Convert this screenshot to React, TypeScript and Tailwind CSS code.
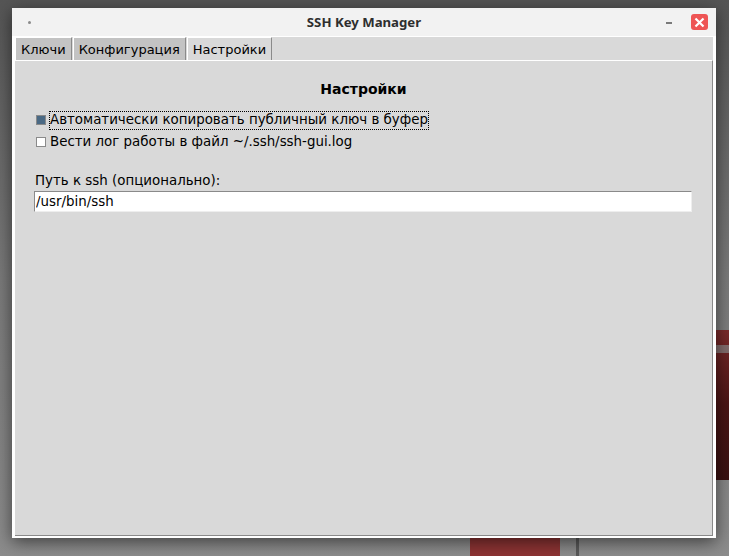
import { useState } from 'react';

const tabs = ['Ключи', 'Конфигурация', 'Настройки'];

function Checkbox({ checked }: { checked: boolean }) {
  return (
    <span
      className={`inline-block w-[10px] h-[10px] border border-[#8a8a8a] ${checked ? 'bg-[#4a6984]' : 'bg-white'}`}
    />
  );
}

export default function App() {
  const [active] = useState(2);

  return (
    <div className="relative w-[729px] h-[556px] overflow-hidden bg-gradient-to-b from-[#555555] via-[#7a7a7a] to-[#8c8c8c] font-['DejaVu_Sans',sans-serif]">
      {/* wallpaper bits */}
      <div className="absolute right-0 top-[330px] w-[40px] h-[150px] bg-gradient-to-b from-[#7a2a2a] via-[#4a1515] to-[#3a1212]" />
      <div className="absolute right-0 top-[345px] w-[40px] h-[8px] bg-[#8a8a8a]/70" />
      <div className="absolute left-[470px] top-[538px] w-[90px] h-[30px] rounded-bl-[10px] bg-[#8e3434]" />
      <div className="absolute left-[576px] top-[538px] w-[3px] h-[30px] bg-[#5a5a5a]" />

      {/* window */}
      <div className="absolute left-[12px] top-[8px] w-[704px] h-[530px] flex flex-col bg-white shadow-[0_4px_16px_rgba(0,0,0,0.55)]">
        {/* title bar */}
        <div className="relative h-[28px] flex items-center justify-center bg-[#f2f2f2]">
          <span className="absolute left-[16px] top-[13px] w-[3px] h-[3px] rounded-full bg-[#8a8a8a]" />
          <span className="font-['Noto_Sans',sans-serif] font-bold text-[13.2px] text-[#2e2e2e] leading-none pt-[1px]">
            SSH Key Manager
          </span>
          <span className="absolute left-[654px] top-[14px] w-[6px] h-[2px] bg-[#7a7a7a]" />
          <span className="absolute left-[679px] top-[6px] w-[17px] h-[16px] rounded-[3px] bg-[#ee5454] flex items-center justify-center">
            <svg width="11" height="11" viewBox="0 0 11 11">
              <path d="M1.5 1.5 L9.5 9.5 M9.5 1.5 L1.5 9.5" stroke="white" strokeWidth="2.2" />
            </svg>
          </span>
        </div>

        {/* body */}
        <div className="flex-1 flex flex-col mx-[3px] mb-[2px] border-t border-white bg-[#d9d9d9]">
          {/* tab bar */}
          <div className="flex items-end h-[23px] bg-[#d9d9d9]">
            {tabs.map((t, i) => (
              <div
                key={t}
                className={`px-[5px] text-[13px] leading-none text-black flex items-center border-t border-l border-white border-r border-r-[#8a8a8a] ${
                  i === active ? 'h-[24px] bg-[#d9d9d9] -mb-[1px]' : 'h-[23px] bg-[#c3c3c3]'
                } ${i > 0 ? 'ml-[1px]' : ''}`}
              >
                {t}
              </div>
            ))}
          </div>

          {/* content frame */}
          <div className="flex-1 flex flex-col border-t border-white border-r border-r-[#8a8a8a] border-b border-b-[#8a8a8a] px-[20px] text-[13.4px] text-black">
            <div className="mt-[21px] text-center font-bold text-[14px] leading-none">Настройки</div>

            <div className="mt-[14px] pl-[1px] flex items-center h-[20px]">
              <Checkbox checked />
              <span className="ml-[3px] px-[1px] h-[19px] flex items-center outline-1 outline-dotted outline-black -outline-offset-1">
                Автоматически копировать публичный ключ в буфер
              </span>
            </div>
            <div className="mt-[2px] pl-[1px] flex items-center h-[20px]">
              <Checkbox checked={false} />
              <span className="ml-[4px]">Вести лог работы в файл ~/.ssh/ssh-gui.log</span>
            </div>

            <div className="mt-[22px] leading-none">Путь к ssh (опционально):</div>
            <input
              readOnly
              value="/usr/bin/ssh"
              className="mt-[4px] ml-[-1px] w-[658px] h-[21px] px-[1px] bg-white text-[13.4px] text-black border border-t-[#8a8a8a] border-l-[#8a8a8a] border-r-[#eeeeee] border-b-[#eeeeee] outline-none font-['DejaVu_Sans',sans-serif]"
            />
          </div>
        </div>
      </div>
    </div>
  );
}
